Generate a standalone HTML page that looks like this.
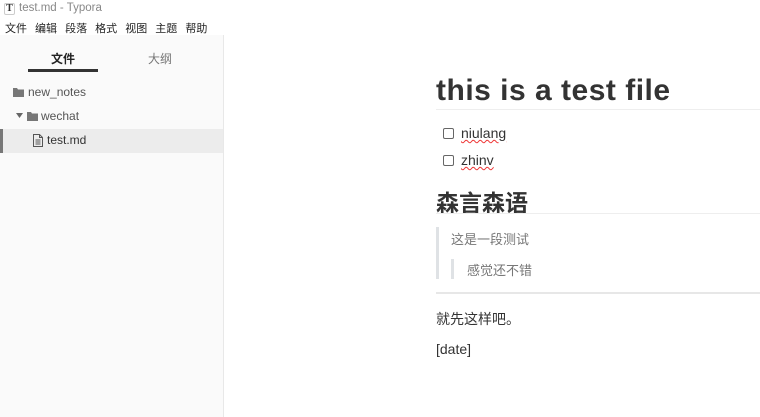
<!DOCTYPE html>
<html><head><meta charset="utf-8"><style>
*{margin:0;padding:0;box-sizing:border-box}
body{width:760px;height:417px;overflow:hidden;background:#fff;font-family:"Liberation Sans","Noto Sans CJK SC",sans-serif;color:#333;position:relative}
.a{position:absolute;white-space:nowrap}
</style></head><body>
<div class="a" style="left:4px;top:3px;width:11px;height:12px;border:1px solid #ccc;border-radius:2px;font:bold 10px 'Liberation Serif',serif;text-align:center;line-height:10px;color:#333">T</div>
<div class="a" style="left:19px;top:2px;font-size:11.5px;color:#888">test.md - Typora</div>
<div class="a" style="left:5px;top:20px;font-size:11px;color:#222;word-spacing:5px">文件 编辑 段落 格式 视图 主题 帮助</div>
<div class="a" style="left:0;top:35px;width:224px;height:382px;background:#fafafa;border-right:1px solid #e8e8e8"></div>
<div class="a" style="left:51px;top:50px;font-size:12px;font-weight:bold;color:#222">文件</div>
<div class="a" style="left:148px;top:50px;font-size:12px;color:#777">大纲</div>
<div class="a" style="left:28px;top:69px;width:70px;height:3px;background:#333"></div>
<svg class="a" style="left:13px;top:87px" width="11" height="10"><path d="M0 1h4l1 1.5h6V10H0z" fill="#777"/></svg>
<div class="a" style="left:28px;top:85px;font-size:12px;color:#555">new_notes</div>
<svg class="a" style="left:16px;top:113px" width="7" height="5"><path d="M0 0h7L3.5 5z" fill="#666"/></svg>
<svg class="a" style="left:27px;top:111px" width="11" height="10"><path d="M0 1h4l1 1.5h6V10H0z" fill="#777"/></svg>
<div class="a" style="left:41px;top:109px;font-size:12px;color:#555">wechat</div>
<div class="a" style="left:0;top:129px;width:223px;height:24px;background:#ececec"></div>
<div class="a" style="left:0;top:129px;width:3px;height:24px;background:#777"></div>
<svg class="a" style="left:33px;top:134px" width="10" height="13"><path d="M.5.5h6l3 3v9H.5z M6.5.5v3h3 M2.5 6h5M2.5 8h5M2.5 10h5" fill="none" stroke="#555" stroke-width="1"/></svg>
<div class="a" style="left:47px;top:133px;font-size:12px;color:#333">test.md</div>
<div class="a" style="left:436px;top:74px;font-size:30px;font-weight:bold;color:#333;letter-spacing:0.5px">this is a test file</div>
<div class="a" style="left:436px;top:109px;width:324px;height:1px;background:#eee"></div>
<div class="a" style="left:443px;top:128px;width:11px;height:11px;border:1px solid #666;border-radius:2px"></div>
<div class="a" style="left:461px;top:125px;font-size:14px;color:#333;text-decoration:underline wavy #e33;text-decoration-thickness:1px">niulang</div>
<div class="a" style="left:443px;top:155px;width:11px;height:11px;border:1px solid #666;border-radius:2px"></div>
<div class="a" style="left:461px;top:152px;font-size:14px;color:#333;text-decoration:underline wavy #e33;text-decoration-thickness:1px">zhinv</div>
<div class="a" style="left:436px;top:184px;font-size:23px;font-weight:bold;color:#333">森言森语</div>
<div class="a" style="left:436px;top:213px;width:324px;height:1px;background:#eee"></div>
<div class="a" style="left:436px;top:227px;width:3px;height:52px;background:#dfe2e5"></div>
<div class="a" style="left:451px;top:229px;font-size:13px;color:#777">这是一段测试</div>
<div class="a" style="left:451px;top:259px;width:3px;height:20px;background:#dfe2e5"></div>
<div class="a" style="left:467px;top:260px;font-size:13px;color:#777">感觉还不错</div>
<div class="a" style="left:436px;top:292px;width:324px;height:2px;background:#e7e7e7"></div>
<div class="a" style="left:436px;top:309px;font-size:14px;color:#333">就先这样吧。</div>
<div class="a" style="left:436px;top:341px;font-size:14px;color:#333">[date]</div>
</body></html>
